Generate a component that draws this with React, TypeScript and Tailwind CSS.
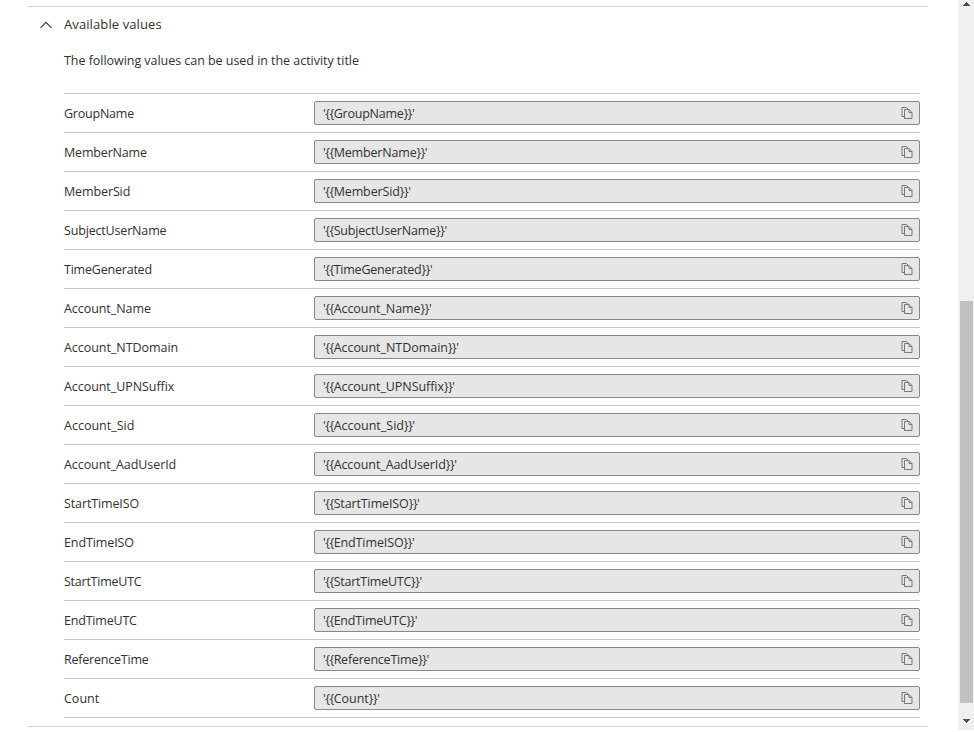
const rows = [
  { name: 'GroupName', tracking: 'tracking-[-0.22px]' },
  { name: 'MemberName', tracking: 'tracking-[-0.17px]' },
  { name: 'MemberSid', tracking: 'tracking-[-0.12px]' },
  { name: 'SubjectUserName', tracking: 'tracking-[-0.17px]' },
  { name: 'TimeGenerated', tracking: 'tracking-[-0.21px]' },
  { name: 'Account_Name', tracking: 'tracking-[-0.06px]' },
  { name: 'Account_NTDomain', tracking: 'tracking-[-0.04px]' },
  { name: 'Account_UPNSuffix', tracking: 'tracking-[-0.06px]' },
  { name: 'Account_Sid', tracking: 'tracking-normal' },
  { name: 'Account_AadUserId', tracking: 'tracking-[-0.08px]' },
  { name: 'StartTimeISO', tracking: 'tracking-[-0.12px]' },
  { name: 'EndTimeISO', tracking: 'tracking-[-0.1px]' },
  { name: 'StartTimeUTC', tracking: 'tracking-[-0.24px]' },
  { name: 'EndTimeUTC', tracking: 'tracking-[-0.2px]' },
  { name: 'ReferenceTime', tracking: 'tracking-[-0.22px]' },
  { name: 'Count', tracking: 'tracking-normal' },
];

function CopyIcon() {
  return (
    <svg width="12" height="12" viewBox="0 0 12 12" fill="none" stroke="#777777" strokeWidth="1">
      <path d="M3.5 9.5h-2.5v-9h4.5l1.5 1.5" />
      <path d="M3.5 2.5h4.5l3 3v6h-7.5z" />
      <path d="M8 2.5v3h3" />
    </svg>
  );
}

function Row({ name, tracking }: { name: string; tracking: string }) {
  return (
    <div className="flex h-[39px] items-center border-b border-[#c8c8c8]">
      <div className="w-[250px] shrink-0 pt-0.5">
        <span className={tracking}>{name}</span>
      </div>
      <div className="flex h-6 flex-1 items-center justify-between rounded-[2px] border border-[#8a8886] bg-[#e6e6e6] pr-[6px] pl-2">
        <div className="pt-0.5 tracking-[-0.5px]">
          {"'{{"}
          <span className={tracking}>{name}</span>
          {"}}'"}
        </div>
        <CopyIcon />
      </div>
    </div>
  );
}

export default function App() {
  return (
    <div className="flex h-[732px] w-[974px] overflow-hidden bg-white font-['Open_Sans','Noto_Sans',sans-serif] text-[12.5px] leading-5 text-[#323130]">
      <main className="w-[958px] pt-[6px] pl-7">
        <section className="h-[721px] w-[900px] border-y border-[#d2d2d2] pr-2">
          <div className="flex h-[35px] items-center pl-3">
            <svg width="12" height="8" viewBox="0 0 12 8" fill="none" stroke="#323130" strokeWidth="1.1">
              <path d="M0.5 6.8L6 1.3l5.5 5.5" />
            </svg>
            <h2 className="ml-3 pb-0.5 text-[13px] tracking-[0.1px]">Available values</h2>
          </div>
          <div className="ml-9">
            <p className="h-[51px] pt-[9px] tracking-[-0.04px]">The following values can be used in the activity title</p>
            <div className="border-t border-[#c8c8c8]">
              {rows.map((row) => (
                <Row key={row.name} {...row} />
              ))}
            </div>
          </div>
        </section>
      </main>
      <div className="flex h-[730px] w-4 flex-col items-center bg-[#f0f0f0]">
        <svg className="shrink-0" width="16" height="16" viewBox="0 0 16 16" shapeRendering="crispEdges">
          <path d="M8 2h1v1h1v1h1v1h1v1H5V5h1V4h1V3h1z" fill="#505050" />
        </svg>
        <div className="mt-[285px] ml-px h-[402px] w-[13px] bg-[#c1c1c1]" />
        <svg className="mt-auto shrink-0" width="16" height="16" viewBox="0 0 16 16" shapeRendering="crispEdges">
          <path d="M5 5h7v1h-1v1h-1v1H9v1H8V8H7V7H6V6H5z" fill="#505050" />
        </svg>
      </div>
    </div>
  );
}
